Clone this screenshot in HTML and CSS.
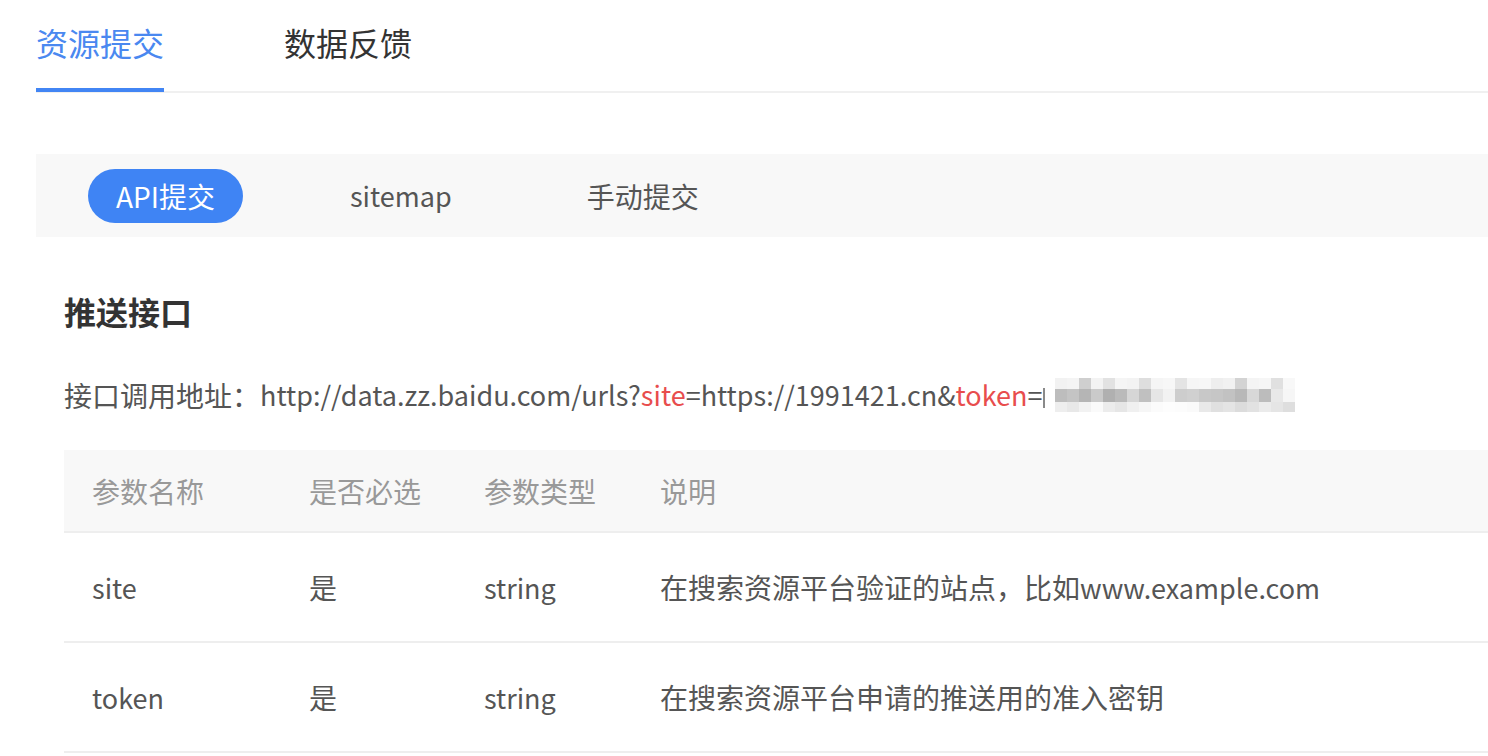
FILE: index.html
```html
<!DOCTYPE html>
<html lang="zh-CN">
<head>
<meta charset="utf-8">
<title>资源提交</title>
<link rel="stylesheet" href="styles.css">
</head>
<body>
<div class="page">
  <nav class="tabs">
    <div class="tab active">资源提交</div>
    <div class="tab">数据反馈</div>
  </nav>

  <div class="subtabs">
    <div class="subtab active">API提交</div>
    <div class="subtab en">sitemap</div>
    <div class="subtab">手动提交</div>
  </div>

  <section class="content">
    <h2 class="title">推送接口</h2>
    <p class="address"><span class="label">接口调用地址：</span>http://data.zz.baidu.com/urls?<span class="hl">site</span>=https://1991421.cn&amp;<span class="hl">token</span>=<svg class="mask" width="256" height="36" viewBox="0 0 256 36" aria-hidden="true">
        <rect x="3" y="10" width="2" height="20" fill="#8a8a8a"/>
        <g>
          <rect x="15" y="0" width="12" height="11" fill="#f2f2f2"/>
          <rect x="27" y="0" width="12" height="11" fill="#f4f4f4"/>
          <rect x="39" y="0" width="12" height="11" fill="#cfcfcf"/>
          <rect x="51" y="0" width="12" height="11" fill="#f3f3f3"/>
          <rect x="63" y="0" width="12" height="11" fill="#e2e2e2"/>
          <rect x="75" y="0" width="12" height="11" fill="#f5f5f5"/>
          <rect x="87" y="0" width="12" height="11" fill="#f3f3f3"/>
          <rect x="99" y="0" width="12" height="11" fill="#dedede"/>
          <rect x="111" y="0" width="12" height="11" fill="#f5f5f5"/>
          <rect x="123" y="0" width="12" height="11" fill="#f7f7f7"/>
          <rect x="135" y="0" width="12" height="11" fill="#e4e4e4"/>
          <rect x="147" y="0" width="12" height="11" fill="#f6f6f6"/>
          <rect x="159" y="0" width="12" height="11" fill="#f7f7f7"/>
          <rect x="171" y="0" width="12" height="11" fill="#eeeeee"/>
          <rect x="183" y="0" width="12" height="11" fill="#f1f1f1"/>
          <rect x="195" y="0" width="12" height="11" fill="#d3d3d3"/>
          <rect x="207" y="0" width="12" height="11" fill="#f4f4f4"/>
          <rect x="219" y="0" width="12" height="11" fill="#f6f6f6"/>
          <rect x="231" y="0" width="12" height="11" fill="#e0e0e0"/>
          <rect x="243" y="0" width="12" height="11" fill="#f8f8f8"/>
        </g>
        <g>
          <rect x="15" y="11" width="12" height="13" fill="#bdbdbd"/>
          <rect x="27" y="11" width="12" height="13" fill="#c4c4c4"/>
          <rect x="39" y="11" width="12" height="13" fill="#b5b5b5"/>
          <rect x="51" y="11" width="12" height="13" fill="#cacaca"/>
          <rect x="63" y="11" width="12" height="13" fill="#b0b0b0"/>
          <rect x="75" y="11" width="12" height="13" fill="#bababa"/>
          <rect x="87" y="11" width="12" height="13" fill="#d6d6d6"/>
          <rect x="99" y="11" width="12" height="13" fill="#c0c0c0"/>
          <rect x="111" y="11" width="12" height="13" fill="#e6e6e6"/>
          <rect x="123" y="11" width="12" height="13" fill="#f2f2f2"/>
          <rect x="135" y="11" width="12" height="13" fill="#cdcdcd"/>
          <rect x="147" y="11" width="12" height="13" fill="#d0d0d0"/>
          <rect x="159" y="11" width="12" height="13" fill="#c8c8c8"/>
          <rect x="171" y="11" width="12" height="13" fill="#c6c6c6"/>
          <rect x="183" y="11" width="12" height="13" fill="#c2c2c2"/>
          <rect x="195" y="11" width="12" height="13" fill="#b8b8b8"/>
          <rect x="207" y="11" width="12" height="13" fill="#d8d8d8"/>
          <rect x="219" y="11" width="12" height="13" fill="#bcbcbc"/>
          <rect x="231" y="11" width="12" height="13" fill="#e8e8e8"/>
          <rect x="243" y="11" width="12" height="13" fill="#f6f6f6"/>
        </g>
        <g>
          <rect x="15" y="24" width="12" height="10" fill="#eeeeee"/>
          <rect x="27" y="24" width="12" height="10" fill="#e8e8e8"/>
          <rect x="39" y="24" width="12" height="10" fill="#f2f2f2"/>
          <rect x="51" y="24" width="12" height="10" fill="#fafafa"/>
          <rect x="63" y="24" width="12" height="10" fill="#ececec"/>
          <rect x="75" y="24" width="12" height="10" fill="#e6e6e6"/>
          <rect x="87" y="24" width="12" height="10" fill="#f0f0f0"/>
          <rect x="99" y="24" width="12" height="10" fill="#f6f6f6"/>
          <rect x="111" y="24" width="12" height="10" fill="#fbfbfb"/>
          <rect x="123" y="24" width="12" height="10" fill="#fdfdfd"/>
          <rect x="135" y="24" width="12" height="10" fill="#fcfcfc"/>
          <rect x="147" y="24" width="12" height="10" fill="#fafafa"/>
          <rect x="159" y="24" width="12" height="10" fill="#e9e9e9"/>
          <rect x="171" y="24" width="12" height="10" fill="#e0e0e0"/>
          <rect x="183" y="24" width="12" height="10" fill="#e4e4e4"/>
          <rect x="195" y="24" width="12" height="10" fill="#dcdcdc"/>
          <rect x="207" y="24" width="12" height="10" fill="#e2e2e2"/>
          <rect x="219" y="24" width="12" height="10" fill="#ebebeb"/>
          <rect x="231" y="24" width="12" height="10" fill="#e5e5e5"/>
          <rect x="243" y="24" width="12" height="10" fill="#dedede"/>
        </g>
      </svg></p>

    <table class="params">
      <thead>
        <tr>
          <th class="c1">参数名称</th>
          <th class="c2">是否必选</th>
          <th class="c3">参数类型</th>
          <th>说明</th>
        </tr>
      </thead>
      <tbody>
        <tr>
          <td class="en">site</td>
          <td>是</td>
          <td class="en">string</td>
          <td>在搜索资源平台验证的站点，比如<span class="en">www.example.com</span></td>
        </tr>
        <tr>
          <td class="en">token</td>
          <td>是</td>
          <td class="en">string</td>
          <td>在搜索资源平台申请的推送用的准入密钥</td>
        </tr>
      </tbody>
    </table>
  </section>
</div>
</body>
</html>
```

FILE: styles.css
```css
* { box-sizing: border-box; }

html, body {
  margin: 0;
  padding: 0;
  background: #ffffff;
}

body {
  font-family: "Noto Sans CJK SC", "Noto Sans", sans-serif;
  color: #555555;
  overflow: hidden;
}

.page {
  padding-left: 36px;
}

/* top tabs */
.tabs {
  display: flex;
  gap: 120px;
  border-bottom: 2px solid #f0f0f0;
}

.tab {
  height: 92px;
  line-height: 84px;
  font-size: 32px;
  color: #333333;
  border-bottom: 4px solid transparent;
  margin-bottom: -1px;
}

.tab.active {
  color: #4a88f0;
  border-bottom-color: #4285f4;
}

/* sub tabs */
.subtabs {
  margin-top: 61px;
  height: 83px;
  background: #f8f8f8;
  display: flex;
  align-items: center;
  gap: 79px;
  padding-left: 52px;
}

.subtab {
  height: 54px;
  line-height: 54px;
  padding: 0 28px;
  font-size: 28px;
  color: #555555;
  border-radius: 27px;
}

.subtab.active {
  background: #3f84f4;
  color: #ffffff;
}

.en {
  font-size: 27px;
}

/* content */
.content {
  padding-left: 28px;
}

.title {
  margin: 54px 0 0;
  font-size: 32px;
  line-height: 40px;
  font-weight: 700;
  color: #333333;
}

.address {
  margin: 44px 0 0;
  font-size: 27px;
  line-height: 40px;
  color: #555555;
  white-space: nowrap;
  display: flex;
  align-items: center;
}

.address .label {
  font-size: 28px;
}

.hl {
  color: #e84d4d;
}

.mask {
  display: block;
  margin-left: -2px;
  margin-top: 2px;
}

.params {
  margin-top: 35px;
  width: 100%;
  border-collapse: collapse;
  font-size: 28px;
}

.params th,
.params td {
  text-align: left;
  padding: 0 0 0 28px;
  border-bottom: 2px solid #eeeeee;
  white-space: nowrap;
}

.params th {
  height: 82px;
  background: #f8f8f8;
  font-weight: 400;
  color: #999999;
}

.params td {
  height: 110px;
  color: #555555;
}

.params .c1 { width: 217px; }
.params .c2 { width: 175px; }
.params .c3 { width: 176px; }
```
